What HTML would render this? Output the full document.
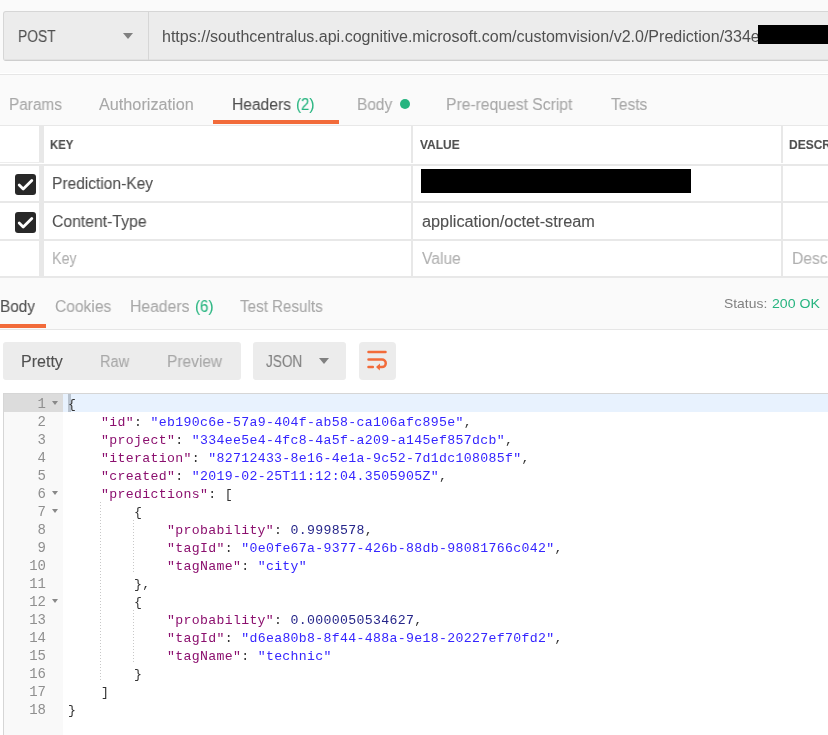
<!DOCTYPE html>
<html><head><meta charset="utf-8">
<style>
*{margin:0;padding:0;box-sizing:border-box}
html,body{width:828px;height:735px;overflow:hidden;background:#fafafa;font-family:"Liberation Sans",sans-serif;position:relative}
.a{position:absolute;white-space:nowrap}
.tx{position:absolute;white-space:pre;line-height:20px;height:20px;transform-origin:0 0;-webkit-text-stroke:0.1px currentColor;will-change:transform}
.tab{font-size:15px;color:#a8a8a8}
.act{color:#505050}
.grn{color:#26b47f}
.hl{position:absolute;background:#e8e8e8}
.bold{font-weight:bold;font-size:12px;color:#505050}
.cell{font-size:15.4px;color:#505050}
.ph{color:#b3b3b3}
.cb{position:absolute;left:15px;width:21px;height:21px;background:#282828;border-radius:3px}
.mono{font-family:"Liberation Mono",monospace;font-size:13.2px;letter-spacing:0.33px}
.ln{position:absolute;left:4px;width:42px;text-align:right;color:#8f8f8f;height:18px;line-height:18px;font-size:14px!important;letter-spacing:0!important;margin-top:-1px;will-change:transform}
.code{position:absolute;left:68px;height:18px;line-height:18px;color:#333;white-space:pre;will-change:transform}
.k{color:#8b0f6e}
.s{color:#3525ff}
.n{color:#26268a}
.fold{position:absolute;left:52px;width:0;height:0;border-left:3px solid transparent;border-right:3px solid transparent;border-top:4px solid #888}
.guide{position:absolute;width:1px;background:repeating-linear-gradient(to bottom,#c8c8c8 0 1px,transparent 1px 3px)}
</style></head><body>

<!-- URL bar -->
<div class="a" style="left:3px;top:11px;width:900px;height:50px;background:#ececec;border:1px solid #d6d6d6;border-bottom-color:#cecece;border-radius:3px"></div>
<div class="a" style="left:4px;top:59px;width:900px;height:1px;background:#e2e2e2"></div>
<div class="a" style="left:148px;top:12px;width:1px;height:48px;background:#d6d6d6"></div>
<div class="a" style="left:123px;top:33px;width:0;height:0;border-left:5px solid transparent;border-right:5px solid transparent;border-top:6px solid #808080"></div>
<div class="a" style="left:758px;top:25px;width:70px;height:19px;background:#000;z-index:5"></div>

<div class="a" style="left:0;top:73px;width:828px;height:1px;background:#fff"></div>
<div class="a" style="left:0;top:74px;width:828px;height:1px;background:#e6e6e6"></div>

<!-- request tabs -->
<div class="a" style="left:400px;top:99px;width:10px;height:10px;border-radius:50%;background:#26b47f"></div>
<div class="a" style="left:213px;top:120px;width:126px;height:4px;background:#f26b3a"></div>

<!-- table -->
<div class="a" style="left:0;top:125px;width:828px;height:153px;background:#fff"></div>
<div class="hl" style="left:0;top:125px;width:828px;height:1px"></div>
<div class="hl" style="left:39px;top:126px;width:5px;height:37px"></div>
<div class="hl" style="left:0;top:162px;width:42px;height:1px;background:#ededed"></div>
<div class="hl" style="left:39px;top:166px;width:5px;height:110px"></div>
<div class="hl" style="left:411px;top:126px;width:2px;height:37px"></div>
<div class="hl" style="left:411px;top:166px;width:2px;height:110px"></div>
<div class="hl" style="left:781px;top:126px;width:2px;height:37px"></div>
<div class="hl" style="left:781px;top:166px;width:2px;height:110px"></div>
<div class="hl" style="left:0;top:164px;width:828px;height:2px"></div>
<div class="hl" style="left:0;top:201px;width:828px;height:2px"></div>
<div class="hl" style="left:0;top:239px;width:828px;height:2px"></div>
<div class="hl" style="left:0;top:276px;width:828px;height:2px"></div>


<div class="cb" style="top:174px"><svg width="21" height="21" viewBox="0 0 21 21"><path d="M4.2 11 L8.2 15 L16.8 6.4" fill="none" stroke="#fff" stroke-width="2.8" stroke-linecap="round" stroke-linejoin="round"/></svg></div>
<div class="cb" style="top:212px"><svg width="21" height="21" viewBox="0 0 21 21"><path d="M4.2 11 L8.2 15 L16.8 6.4" fill="none" stroke="#fff" stroke-width="2.8" stroke-linecap="round" stroke-linejoin="round"/></svg></div>

<div class="a" style="left:421px;top:169px;width:270px;height:24px;background:#000;z-index:5"></div>

<!-- response tabs -->
<div class="a" style="left:0;top:324px;width:46px;height:4px;background:#f26b3a"></div>
<div class="a" style="left:0;top:329px;width:828px;height:1px;background:#e6e6e6"></div>
<div class="a" style="left:0;top:330px;width:828px;height:405px;background:#fff"></div>

<!-- buttons -->
<div class="a" style="left:3px;top:342px;width:238px;height:38px;background:#ececec;border-radius:3px"></div>
<div class="a" style="left:253px;top:342px;width:93px;height:38px;background:#ececec;border-radius:3px"></div>
<div class="a" style="left:319px;top:358px;width:0;height:0;border-left:5px solid transparent;border-right:5px solid transparent;border-top:6px solid #808080"></div>
<div class="a" style="left:359px;top:342px;width:37px;height:38px;background:#ececec;border-radius:4px"></div>
<svg class="a" style="left:359px;top:342px" width="37" height="38" viewBox="0 0 37 38">
<g fill="none" stroke="#f26b3a" stroke-width="2.5" stroke-linecap="round">
<path d="M9.5 10.1 H26.5"/>
<path d="M9.5 17.6 H23 A3.75 3.75 0 0 1 23 25.1 H20"/>
<path d="M9.5 25.1 H13.8"/>
</g>
<path d="M17 25.1 L21 21.6 L20.8 28.6 Z" fill="#f26b3a"/>
</svg>

<!-- editor -->
<div class="a" style="left:3px;top:393px;width:830px;height:350px;border-top:1px solid #d6d6d6;border-left:1px solid #d6d6d6"></div>
<div class="a" style="left:4px;top:394px;width:59px;height:341px;background:#f9f9f9"></div>
<div class="a" style="left:4px;top:394px;width:59px;height:18px;background:#dcdcdc"></div>
<div class="a" style="left:63px;top:394px;width:765px;height:18px;background:#e8f2fe"></div>
<div class="a" style="left:68px;top:394px;width:3px;height:18px;background:#b9c3cf"></div>

<div class="ln mono" style="top:396px">1</div>
<div class="fold" style="top:401px"></div>
<div class="code mono" style="top:396px"><span>{</span></div>
<div class="ln mono" style="top:414px">2</div>
<div class="code mono" style="top:414px">    <span class="k">"id"</span>: <span class="s">"eb190c6e-57a9-404f-ab58-ca106afc895e"</span>,</div>
<div class="ln mono" style="top:432px">3</div>
<div class="code mono" style="top:432px">    <span class="k">"project"</span>: <span class="s">"334ee5e4-4fc8-4a5f-a209-a145ef857dcb"</span>,</div>
<div class="ln mono" style="top:450px">4</div>
<div class="code mono" style="top:450px">    <span class="k">"iteration"</span>: <span class="s">"82712433-8e16-4e1a-9c52-7d1dc108085f"</span>,</div>
<div class="ln mono" style="top:468px">5</div>
<div class="code mono" style="top:468px">    <span class="k">"created"</span>: <span class="s">"2019-02-25T11:12:04.3505905Z"</span>,</div>
<div class="ln mono" style="top:486px">6</div>
<div class="fold" style="top:491px"></div>
<div class="code mono" style="top:486px">    <span class="k">"predictions"</span>: [</div>
<div class="ln mono" style="top:504px">7</div>
<div class="fold" style="top:509px"></div>
<div class="code mono" style="top:504px">        {</div>
<div class="ln mono" style="top:522px">8</div>
<div class="code mono" style="top:522px">            <span class="k">"probability"</span>: <span class="n">0.9998578</span>,</div>
<div class="ln mono" style="top:540px">9</div>
<div class="code mono" style="top:540px">            <span class="k">"tagId"</span>: <span class="s">"0e0fe67a-9377-426b-88db-98081766c042"</span>,</div>
<div class="ln mono" style="top:558px">10</div>
<div class="code mono" style="top:558px">            <span class="k">"tagName"</span>: <span class="s">"city"</span></div>
<div class="ln mono" style="top:576px">11</div>
<div class="code mono" style="top:576px">        },</div>
<div class="ln mono" style="top:594px">12</div>
<div class="fold" style="top:599px"></div>
<div class="code mono" style="top:594px">        {</div>
<div class="ln mono" style="top:612px">13</div>
<div class="code mono" style="top:612px">            <span class="k">"probability"</span>: <span class="n">0.0000050534627</span>,</div>
<div class="ln mono" style="top:630px">14</div>
<div class="code mono" style="top:630px">            <span class="k">"tagId"</span>: <span class="s">"d6ea80b8-8f44-488a-9e18-20227ef70fd2"</span>,</div>
<div class="ln mono" style="top:648px">15</div>
<div class="code mono" style="top:648px">            <span class="k">"tagName"</span>: <span class="s">"technic"</span></div>
<div class="ln mono" style="top:666px">16</div>
<div class="code mono" style="top:666px">        }</div>
<div class="ln mono" style="top:684px">17</div>
<div class="code mono" style="top:684px">    ]</div>
<div class="ln mono" style="top:702px">18</div>
<div class="code mono" style="top:702px">}</div>
<div class="guide" style="left:100px;top:502px;height:180px"></div>
<div class="guide" style="left:133px;top:520px;height:54px"></div>
<div class="guide" style="left:133px;top:610px;height:54px"></div>
<div class="tx" style="left:17.54px;top:27px;font-size:16px;color:#505050;transform:scaleX(0.8643)">POST</div>
<div class="tx" style="left:162.40px;top:27px;font-size:16px;color:#505050;transform:scaleX(1.0017);-webkit-text-stroke:0">https://southcentralus.api.cognitive.microsoft.com/customvision/v2.0/Prediction/334ee5e4-4fc8</div>
<div class="tx" style="left:8.54px;top:95px;font-size:16px;color:#a8a8a8;transform:scaleX(0.9583)">Params</div>
<div class="tx" style="left:99.30px;top:95px;font-size:16px;color:#a8a8a8;transform:scaleX(1.0140)">Authorization</div>
<div class="tx" style="left:231.63px;top:95px;font-size:16px;color:#505050;transform:scaleX(0.9746)">Headers</div>
<div class="tx" style="left:295.86px;top:95px;font-size:16px;color:#26b47f;transform:scaleX(0.9389)">(2)</div>
<div class="tx" style="left:357.44px;top:95px;font-size:16px;color:#a8a8a8;transform:scaleX(0.9639)">Body</div>
<div class="tx" style="left:446.32px;top:95px;font-size:16px;color:#a8a8a8;transform:scaleX(0.9797)">Pre-request Script</div>
<div class="tx" style="left:610.70px;top:95px;font-size:16px;color:#a8a8a8;transform:scaleX(0.9730)">Tests</div>
<div class="tx" style="left:49.66px;top:135px;font-size:12px;color:#505050;transform:scaleX(0.9417);font-weight:bold">KEY</div>
<div class="tx" style="left:420.00px;top:135px;font-size:12px;color:#505050;transform:scaleX(0.9975);font-weight:bold">VALUE</div>
<div class="tx" style="left:789.40px;top:135px;font-size:12px;color:#505050;transform:scaleX(0.9975);font-weight:bold">DESCRIPTION</div>
<div class="tx" style="left:52.43px;top:174px;font-size:16px;color:#505050;transform:scaleX(0.9709)">Prediction-Key</div>
<div class="tx" style="left:52.02px;top:212px;font-size:16px;color:#505050;transform:scaleX(0.9842)">Content-Type</div>
<div class="tx" style="left:421.58px;top:212px;font-size:16px;color:#505050;transform:scaleX(1.0173)">application/octet-stream</div>
<div class="tx" style="left:52.41px;top:249px;font-size:16px;color:#b0b0b0;transform:scaleX(0.8926)">Key</div>
<div class="tx" style="left:422.00px;top:249px;font-size:16px;color:#b0b0b0;transform:scaleX(0.9769)">Value</div>
<div class="tx" style="left:791.62px;top:249px;font-size:16px;color:#b0b0b0;transform:scaleX(0.9769)">Description</div>
<div class="tx" style="left:0.04px;top:297px;font-size:16px;color:#505050;transform:scaleX(0.9583)">Body</div>
<div class="tx" style="left:54.53px;top:297px;font-size:16px;color:#a8a8a8;transform:scaleX(0.9732)">Cookies</div>
<div class="tx" style="left:130.27px;top:297px;font-size:16px;color:#a8a8a8;transform:scaleX(0.9831)">Headers</div>
<div class="tx" style="left:194.56px;top:297px;font-size:16px;color:#26b47f;transform:scaleX(0.9444)">(6)</div>
<div class="tx" style="left:240.00px;top:297px;font-size:16px;color:#a8a8a8;transform:scaleX(0.9483)">Test Results</div>
<div class="tx" style="left:723.93px;top:294px;font-size:13px;color:#808080;transform:scaleX(1.0684);-webkit-text-stroke:0">Status:</div>
<div class="tx" style="left:771.91px;top:294px;font-size:13px;color:#26b47f;transform:scaleX(1.0860);-webkit-text-stroke:0">200 OK</div>
<div class="tx" style="left:20.70px;top:352px;font-size:16px;color:#505050;transform:scaleX(1.0024)">Pretty</div>
<div class="tx" style="left:100.19px;top:352px;font-size:16px;color:#a8a8a8;transform:scaleX(0.9129)">Raw</div>
<div class="tx" style="left:166.83px;top:352px;font-size:16px;color:#a8a8a8;transform:scaleX(0.9679)">Preview</div>
<div class="tx" style="left:265.90px;top:352px;font-size:16px;color:#808080;transform:scaleX(0.8488)">JSON</div>
</body></html>
